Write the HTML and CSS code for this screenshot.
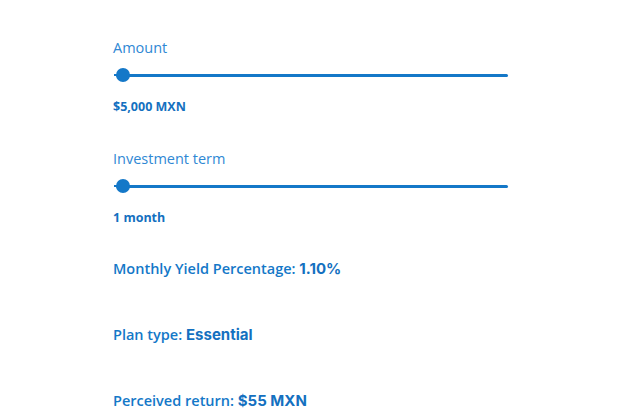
FILE: index.html
```html
<!DOCTYPE html>
<html lang="en">

<head>
    <meta charset="UTF-8">
    <meta name="viewport" content="width=device-width, initial-scale=1.0">
    <link rel="stylesheet" href="styles.css">
    <title>Investment simulator</title>
</head>

<body>
    <div class="wrapper">
        <div class="field">
            <label class="label" for="amount">Amount</label>
            <input class="slider" id="amount" type="range" min="5000" max="500000" step="1000" value="5000">
            <span class="value">$5,000 MXN</span>
        </div>

        <div class="field field_term">
            <label class="label" for="term">Investment term</label>
            <input class="slider" id="term" type="range" min="1" max="36" value="1">
            <span class="value">1 month</span>
        </div>

        <div class="results">
            <p class="result">Monthly Yield Percentage: <b class="result_value">1.10%</b></p>
            <p class="result">Plan type: <b class="result_value">Essential</b></p>
            <p class="result">Perceived return: <b class="result_value">$55 MXN</b></p>
        </div>
    </div>
</body>

</html>
```

FILE: styles.css
```css
* {
    margin: 0px;
    padding: 0px;
    box-sizing: border-box;
}

body {
    background: #FFFFFF;
    font-family: "Open Sans", "Noto Sans", sans-serif;
    color: #1478C8;
}

.wrapper {
    width: 100%;
    display: flex;
    flex-direction: column;
    padding: 38px 0px 0px 113px;
}

.field {
    width: 396px;
    display: flex;
    flex-direction: column;
}

.field_term {
    margin-top: 34px;
}

.label {
    font-size: 14.5px;
    line-height: 20px;
    color: #2F88D4;
}

.slider {
    -webkit-appearance: none;
    appearance: none;
    width: 394px;
    height: 14px;
    margin: 10px 0px 17px 1px;
    background: linear-gradient(#1478C8, #1478C8) 0px 6px / 3px 2px no-repeat;
    outline: none;
}

.slider::-webkit-slider-runnable-track {
    height: 3px;
    margin-left: 2px;
    background: #1478C8;
    border-radius: 2px;
}

.slider::-webkit-slider-thumb {
    -webkit-appearance: none;
    appearance: none;
    width: 14px;
    height: 14px;
    margin-top: -5.5px;
    border-radius: 50%;
    background: #1478C8;
    border: none;
}

.value {
    font-size: 12.5px;
    line-height: 16px;
    font-weight: 700;
    color: #1470C0;
}

.results {
    display: flex;
    flex-direction: column;
    gap: 46px;
    margin-top: 33px;
}

.result {
    font-size: 14.5px;
    line-height: 20px;
    font-weight: 600;
    color: #1478C8;
}

.result_value {
    font-family: "Inter", sans-serif;
    font-size: 15px;
    font-weight: 700;
    color: #1470C0;
}
```
